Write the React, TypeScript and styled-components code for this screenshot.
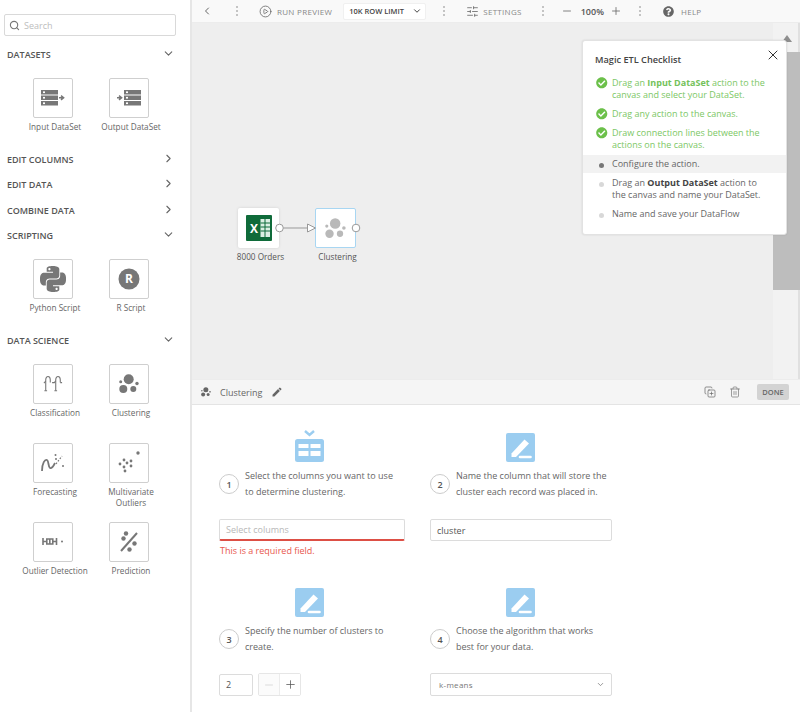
import React from 'react';
import styled, { createGlobalStyle } from 'styled-components';
import { ChevronDown, ChevronLeft, ChevronRight, CirclePlay, CopyPlus, Minus, Plus, Search, SlidersHorizontal, Trash2, X } from 'lucide-react';
import { FaCheckCircle, FaQuestionCircle } from 'react-icons/fa';
import { MdEdit } from 'react-icons/md';
import { SiPython } from 'react-icons/si';

const GlobalStyle = createGlobalStyle`
  html, body {
    margin: 0;
    padding: 0;
    background: #fff;
    font-family: 'Open Sans', 'Liberation Sans', sans-serif;
  }
  * {
    box-sizing: border-box;
  }
`;

const ICON_GREY = '#777';

function DatasetIcon({ output }: { output?: boolean }) {
  const barX = output ? 7 : 0;
  const arrowX = output ? 0 : 18;
  return (
    <svg width="24" height="16" viewBox="0 0 24 16">
      {[0, 5.5, 11].map((y) => (
        <g key={y}>
          <rect x={barX} y={y} width="17" height="4.5" fill={ICON_GREY} />
          <rect x={barX + 2} y={y + 1.4} width="2" height="1.7" fill="#fff" />
        </g>
      ))}
      <path d={`M${arrowX} 7.7h3.5M${arrowX + 2} 5.6l2.6 2.1-2.6 2.1`} stroke={ICON_GREY} strokeWidth="1.5" fill="none" />
    </svg>
  );
}

function RScriptIcon() {
  return (
    <svg width="22" height="22" viewBox="0 0 22 22">
      <circle cx="11" cy="11" r="10.5" fill={ICON_GREY} />
      <text x="11" y="15.2" textAnchor="middle" fontSize="12" fontWeight="700" fontFamily="Open Sans" fill="#fff">R</text>
    </svg>
  );
}

function ClusterIcon({ size = 20, color = ICON_GREY }: { size?: number; color?: string }) {
  return (
    <svg width={size} height={size} viewBox="0 0 20 20" fill={color}>
      <circle cx="9.7" cy="5.3" r="5" />
      <circle cx="4.3" cy="15" r="4" />
      <circle cx="14.3" cy="15" r="3" />
      <circle cx="1.7" cy="7.7" r="1.5" />
      <circle cx="18" cy="9.5" r="1.7" />
    </svg>
  );
}

function ClassificationIcon() {
  return (
    <svg width="20" height="17" viewBox="0 0 22 18" fill="none" stroke={ICON_GREY} strokeWidth="1.2">
      <path d="M3 17V5c0-5 5-5 5 0v3" />
      <path d="M1.5 17h3M1 8.5l2-2" />
      <path d="M14 17V5c0-5 5-5 5 0v3" />
      <path d="M12.5 17h3M10 8h2.5l1.5-2M19 8h2" />
    </svg>
  );
}

function ForecastIcon() {
  return (
    <svg width="24" height="20" viewBox="0 0 24 20" fill="none" stroke={ICON_GREY}>
      <path d="M1 18c0-8 3-12 5-11 2 1 1 7 3 8s4-3 5-5" strokeWidth="1.8" />
      <path d="M15 11l6-8" strokeWidth="1.2" strokeDasharray="1.6 1.6" />
      <circle cx="14.5" cy="2" r="1" fill={ICON_GREY} stroke="none" />
      <circle cx="15" cy="6" r="1" fill={ICON_GREY} stroke="none" />
      <circle cx="22" cy="13" r="1" fill={ICON_GREY} stroke="none" />
    </svg>
  );
}

function OutliersIcon() {
  const dots = [[5, 9], [1, 13], [8, 12], [12, 10], [5, 16], [12, 15], [6, 20], [19, 2]];
  return (
    <svg width="22" height="24" viewBox="0 0 22 24" fill={ICON_GREY}>
      {dots.map(([x, y]) => (
        <circle key={`${x}-${y}`} cx={x + 1} cy={y} r={x === 19 ? 1.7 : 1.4} />
      ))}
    </svg>
  );
}

function OutlierDetectionIcon() {
  return (
    <svg width="22" height="8" viewBox="0 0 22 8" fill="none" stroke={ICON_GREY} strokeWidth="1.6">
      <path d="M1 0v7M1 3.5h3M4.8 1h6v5h-6zM7.8 1v5M11 3.5h3M14.5 0v7" />
      <circle cx="20" cy="3.5" r="1" fill={ICON_GREY} stroke="none" />
    </svg>
  );
}

function PredictionIcon() {
  return (
    <svg width="18" height="21" viewBox="0 0 18 21" fill={ICON_GREY}>
      <path d="M1 20L17 2" stroke={ICON_GREY} strokeWidth="2" />
      <circle cx="6" cy="2.5" r="2.2" />
      <circle cx="3.5" cy="7.5" r="2.2" />
      <circle cx="14.5" cy="12.5" r="2.2" />
      <circle cx="9.5" cy="18.5" r="2.2" />
    </svg>
  );
}

function ExcelIcon() {
  return (
    <svg width="26" height="26" viewBox="0 0 26 26">
      <rect width="26" height="26" rx="1" fill="#0f6b3a" />
      <rect x="14.5" y="4" width="9.5" height="18" fill="#dcefe3" />
      <path d="M14.5 8h9.5M14.5 12h9.5M14.5 16h9.5M19 4v18" stroke="#0f6b3a" strokeWidth="1" />
      <text x="8" y="17.5" textAnchor="middle" fontSize="12" fontWeight="700" fontFamily="Open Sans" fill="#fff">X</text>
    </svg>
  );
}

function PencilTile() {
  return (
    <svg width="29" height="29" viewBox="0 0 29 29">
      <rect width="29" height="29" rx="2" fill="#9bcdf0" />
      <path d="M5.5 20.5L18.5 6.5l4.5 4L10 24H5.5z" fill="#fff" />
      <path d="M14 24h10.5" stroke="#fff" strokeWidth="2.6" strokeLinecap="round" />
    </svg>
  );
}

function TableTile() {
  return (
    <svg width="29" height="32" viewBox="0 0 29 32">
      <path d="M10 1l4.5 4L19 1" fill="none" stroke="#9bcdf0" strokeWidth="2.4" />
      <rect y="9" width="29" height="23" rx="2.5" fill="#9bcdf0" />
      <path d="M3.5 14h10v4h-10zM15.5 14h10v4h-10zM3.5 21h10v5h-10zM15.5 21h10v5h-10z" fill="#fff" />
    </svg>
  );
}

function ToolDots({ $ml }: { $ml: number }) {
  return (
    <DotsWrap $ml={$ml}>
      <i />
      <i />
      <i />
    </DotsWrap>
  );
}

const Tile = ({ icon, label }: { icon: React.ReactNode; label: string }) => (
  <TileItem>
    <TileBox>{icon}</TileBox>
    <TileLabel>{label}</TileLabel>
  </TileItem>
);

function CategoryHeader({ title, open }: { title: string; open?: boolean }) {
  return (
    <CategoryRow>
      <span>{title}</span>
      {open ? <ChevronDown size={13} strokeWidth={2} /> : <ChevronRight size={13} strokeWidth={2} />}
    </CategoryRow>
  );
}

function ChecklistItem({ done, active, pending, children }: { done?: boolean; active?: boolean; pending?: boolean; children: React.ReactNode }) {
  return (
    <CheckRow $done={done} $active={active}>
      <CheckMark>
        {done && <FaCheckCircle size={11.5} color="#6cc04a" />}
        {active && <Dot $color="#777" />}
        {pending && <Dot $color="#d8d8d8" />}
      </CheckMark>
      <span>{children}</span>
    </CheckRow>
  );
}

function Step({ n, text, icon }: { n: number; text: React.ReactNode; icon: React.ReactNode }) {
  return (
    <>
      <StepIcon>{icon}</StepIcon>
      <StepRow>
        <StepNumber>{n}</StepNumber>
        <StepText>{text}</StepText>
      </StepRow>
    </>
  );
}

export default function App() {
  return (
    <Page>
      <GlobalStyle />
      <Sidebar>
        <SearchBox>
          <Search size={11} strokeWidth={2.4} color="#777" />
          <span>Search</span>
        </SearchBox>
        <CategoryHeader title="DATASETS" open />
        <TileGrid>
          <Tile icon={<DatasetIcon />} label="Input DataSet" />
          <Tile icon={<DatasetIcon output />} label="Output DataSet" />
        </TileGrid>
        <CategoryHeader title="EDIT COLUMNS" />
        <CategoryHeader title="EDIT DATA" />
        <CategoryHeader title="COMBINE DATA" />
        <CategoryHeader title="SCRIPTING" open />
        <TileGrid>
          <Tile icon={<SiPython size={26} color={ICON_GREY} />} label="Python Script" />
          <Tile icon={<RScriptIcon />} label="R Script" />
        </TileGrid>
        <CategoryHeader title="DATA SCIENCE" open />
        <TileGrid>
          <Tile icon={<ClassificationIcon />} label="Classification" />
          <Tile icon={<ClusterIcon />} label="Clustering" />
          <Tile icon={<ForecastIcon />} label="Forecasting" />
          <Tile icon={<OutliersIcon />} label="Multivariate Outliers" />
          <Tile icon={<OutlierDetectionIcon />} label="Outlier Detection" />
          <Tile icon={<PredictionIcon />} label="Prediction" />
        </TileGrid>
      </Sidebar>

      <Main>
        <Toolbar>
          <ToolIcon $ml={9}><ChevronLeft size={12} strokeWidth={2} /></ToolIcon>
          <ToolDots $ml={23} />
          <ToolIcon $ml={21}><CirclePlay size={13} strokeWidth={1.5} /></ToolIcon>
          <ToolLabel $ml={5}>RUN PREVIEW</ToolLabel>
          <RowLimit>
            <span>10K ROW LIMIT</span>
            <ChevronDown size={10} strokeWidth={2.4} />
          </RowLimit>
          <ToolDots $ml={17} />
          <ToolIcon $ml={21}><SlidersHorizontal size={13} strokeWidth={1.5} /></ToolIcon>
          <ToolLabel $ml={4}>SETTINGS</ToolLabel>
          <ToolDots $ml={20} />
          <ToolIcon $ml={17}><Minus size={12} strokeWidth={1.6} /></ToolIcon>
          <ZoomValue>100%</ZoomValue>
          <ToolIcon $ml={6}><Plus size={12} strokeWidth={1.6} /></ToolIcon>
          <ToolDots $ml={17} />
          <ToolIcon $ml={22}><FaQuestionCircle size={11} color="#666" /></ToolIcon>
          <ToolLabel $ml={7}>HELP</ToolLabel>
        </Toolbar>

        <Canvas>
          <ScrollTrack>
            <ScrollArrow />
            <ScrollThumb />
          </ScrollTrack>

          <CanvasNode $left={46} $top={185}>
            <NodeBox><ExcelIcon /></NodeBox>
            <NodeLabel>8000 Orders</NodeLabel>
          </CanvasNode>
          <CanvasNode $left={123} $top={185}>
            <NodeBox $selected><ClusterIcon size={21} color="#b9b9b9" /></NodeBox>
            <NodeLabel>Clustering</NodeLabel>
          </CanvasNode>
          <Connector width="90" height="12" viewBox="0 0 90 12">
            <circle cx="4.5" cy="6" r="3.8" fill="#fff" stroke="#999" />
            <path d="M8.5 6h24" stroke="#999" />
            <path d="M32.5 2l8 4-8 4z" fill="#fff" stroke="#999" />
            <circle cx="81" cy="6" r="3.8" fill="#fff" stroke="#999" />
          </Connector>

          <Checklist>
            <ChecklistTitle>Magic ETL Checklist</ChecklistTitle>
            <CloseButton><X size={16} strokeWidth={1.5} /></CloseButton>
            <CheckList>
              <ChecklistItem done>Drag an <b>Input DataSet</b> action to the canvas and select your DataSet.</ChecklistItem>
              <ChecklistItem done>Drag any action to the canvas.</ChecklistItem>
              <ChecklistItem done>Draw connection lines between the actions on the canvas.</ChecklistItem>
              <ChecklistItem active>Configure the action.</ChecklistItem>
              <ChecklistItem pending>Drag an <b>Output DataSet</b> action to the canvas and name your DataSet.</ChecklistItem>
              <ChecklistItem pending>Name and save your DataFlow</ChecklistItem>
            </CheckList>
          </Checklist>
        </Canvas>

        <EditorHeader>
          <ClusterIcon size={10} color="#666" />
          <EditorTitle>Clustering</EditorTitle>
          <MdEdit size={12} color="#666" />
          <HeaderActions>
            <CopyPlus size={12} strokeWidth={1.4} color="#666" />
            <Trash2 size={12} strokeWidth={1.4} color="#777" />
            <DoneButton>DONE</DoneButton>
          </HeaderActions>
        </EditorHeader>

        <Form>
          <StepCell>
            <Step n={1} icon={<TableTile />} text="Select the columns you want to use to determine clustering." />
            <FieldBox $error>Select columns</FieldBox>
            <FieldError>This is a required field.</FieldError>
          </StepCell>
          <StepCell>
            <Step n={2} icon={<PencilTile />} text="Name the column that will store the cluster each record was placed in." />
            <FieldBox $value>cluster</FieldBox>
          </StepCell>
          <StepCell>
            <Step n={3} icon={<PencilTile />} text="Specify the number of clusters to create." />
            <NumberRow>
              <NumberInput>2</NumberInput>
              <Stepper>
                <StepperButton $disabled><Minus size={12} strokeWidth={1.2} /></StepperButton>
                <StepperButton><Plus size={13} strokeWidth={1.4} /></StepperButton>
              </Stepper>
            </NumberRow>
          </StepCell>
          <StepCell>
            <Step n={4} icon={<PencilTile />} text="Choose the algorithm that works best for your data." />
            <AlgoSelect>
              <span>k-means</span>
              <ChevronDown size={9} strokeWidth={2} />
            </AlgoSelect>
          </StepCell>
        </Form>
      </Main>
    </Page>
  );
}

const Page = styled.div`
  width: 800px;
  height: 712px;
  display: flex;
  overflow: hidden;
  background: #fff;
`;

const Sidebar = styled.aside`
  width: 192px;
  flex-shrink: 0;
  padding: 14px 2px 0 0;
  border-right: 2px solid #e6e6e6;
  background: #fff;
`;

const SearchBox = styled.div`
  width: 172px;
  height: 22px;
  margin: 0 0 6px 4px;
  padding-left: 4px;
  display: flex;
  align-items: center;
  gap: 4px;
  border: 1px solid #d9d9d9;
  border-radius: 2px;
  color: #bdbdbd;
  font-size: 9px;
`;

const CategoryRow = styled.div`
  height: 25.5px;
  padding: 0 13px 0 7px;
  display: flex;
  align-items: center;
  justify-content: space-between;
  color: #555;
  font-size: 9px;
  font-weight: 600;
  svg {
    color: #666;
    margin-top: -2px;
  }
`;

const TileGrid = styled.div`
  padding: 10.5px 0 0 15px;
  display: grid;
  grid-template-columns: 76px 76px;
  grid-auto-rows: 68.5px;
  row-gap: 10.5px;
`;

const TileItem = styled.div`
  display: flex;
  flex-direction: column;
  align-items: center;
`;

const TileBox = styled.div`
  width: 40px;
  height: 40px;
  flex-shrink: 0;
  display: flex;
  align-items: center;
  justify-content: center;
  border: 1.5px solid #cfcfcf;
  border-radius: 2px;
  background: #fff;
`;

const TileLabel = styled.div`
  width: 76px;
  margin-top: 3px;
  padding-left: 4px;
  text-align: center;
  color: #666;
  font-size: 8.2px;
  line-height: 11px;
`;

const Main = styled.main`
  flex: 1;
  min-width: 0;
  display: flex;
  flex-direction: column;
`;

const Toolbar = styled.div`
  height: 23px;
  flex-shrink: 0;
  display: flex;
  align-items: center;
  background: #f9f9f9;
  border-bottom: 1px solid #ececec;
`;

const ToolIcon = styled.span<{ $ml: number }>`
  margin-left: ${(p) => p.$ml}px;
  display: inline-flex;
  color: #666;
`;

const ToolLabel = styled.span<{ $ml: number }>`
  margin-left: ${(p) => p.$ml}px;
  color: #888;
  font-size: 8px;
  letter-spacing: 0.3px;
`;

const DotsWrap = styled.span<{ $ml: number }>`
  margin-left: ${(p) => p.$ml}px;
  display: inline-flex;
  flex-direction: column;
  gap: 2px;
  i {
    width: 2px;
    height: 2px;
    background: #c4c4c4;
    display: block;
  }
`;

const RowLimit = styled.div`
  width: 83px;
  height: 17px;
  margin-left: 11px;
  padding: 0 3px 0 5px;
  display: flex;
  align-items: center;
  justify-content: space-between;
  background: #fff;
  border-radius: 2px;
  border: 1px solid #f0f0f0;
  color: #444;
  font-size: 7.5px;
  font-weight: 600;
`;

const ZoomValue = styled.span`
  margin-left: 8px;
  color: #555;
  font-size: 9px;
  font-weight: 600;
`;

const Canvas = styled.div`
  position: relative;
  height: 356px;
  flex-shrink: 0;
  background: #eeeeee;
`;

const ScrollTrack = styled.div`
  position: absolute;
  top: 0;
  right: 0;
  bottom: 0;
  width: 27px;
  background: #f2f2f2;
  border-right: 2px solid #e0e0e0;
`;

const ScrollArrow = styled.div`
  position: absolute;
  top: 12px;
  left: 9px;
  width: 0;
  height: 0;
  border-left: 5px solid transparent;
  border-right: 5px solid transparent;
  border-bottom: 7px solid #8e8e8e;
`;

const ScrollThumb = styled.div`
  position: absolute;
  top: 29px;
  left: 0;
  right: -2px;
  height: 238px;
  background: #bdbdbd;
`;

const CanvasNode = styled.div<{ $left: number; $top: number }>`
  position: absolute;
  left: ${(p) => p.$left}px;
  top: ${(p) => p.$top}px;
  width: 41px;
  display: flex;
  flex-direction: column;
  align-items: center;
`;

const NodeBox = styled.div<{ $selected?: boolean }>`
  width: 41px;
  height: 40px;
  display: flex;
  align-items: center;
  justify-content: center;
  background: #fff;
  border-radius: 2px;
  border: ${(p) => (p.$selected ? '1.5px solid #a8d6f2' : '0')};
  box-shadow: ${(p) => (p.$selected ? 'none' : '0 0 3px rgba(0, 0, 0, 0.12)')};
`;

const NodeLabel = styled.div`
  margin: 3px 0 0 4px;
  color: #555;
  font-size: 8.2px;
  line-height: 12px;
  white-space: nowrap;
`;

const Connector = styled.svg`
  position: absolute;
  left: 83px;
  top: 199px;
`;

const Checklist = styled.div`
  position: absolute;
  top: 17px;
  right: 13px;
  width: 205px;
  height: 195px;
  padding-top: 12px;
  background: #fff;
  border: 1px solid #e2e2e2;
  border-radius: 3px;
  box-shadow: 0 0 2px rgba(0, 0, 0, 0.12);
`;

const ChecklistTitle = styled.div`
  padding-left: 12px;
  color: #444;
  font-size: 9.2px;
  font-weight: 600;
  line-height: 13px;
`;

const CloseButton = styled.span`
  position: absolute;
  top: 6px;
  right: 5px;
  display: inline-flex;
  color: #333;
`;

const CheckList = styled.div`
  margin-top: 8px;
  display: flex;
  flex-direction: column;
  gap: 1px;
`;

const CheckRow = styled.div<{ $done?: boolean; $active?: boolean }>`
  padding: 3px 18px 3px 13px;
  display: flex;
  background: ${(p) => (p.$active ? '#f2f2f2' : 'transparent')};
  color: ${(p) => (p.$done ? '#7cc765' : '#666')};
  font-size: 9px;
  line-height: 12px;
  b {
    font-weight: 700;
    color: ${(p) => (p.$done ? '#74c25a' : '#444')};
  }
`;

const CheckMark = styled.span`
  width: 16px;
  height: 12px;
  flex-shrink: 0;
  display: flex;
  align-items: center;
`;

const Dot = styled.i<{ $color: string }>`
  width: 5px;
  height: 5px;
  margin: 2px 0 0 3px;
  border-radius: 50%;
  background: ${(p) => p.$color};
`;

const EditorHeader = styled.div`
  height: 26px;
  flex-shrink: 0;
  padding: 0 11px 0 9px;
  display: flex;
  align-items: center;
  background: #f5f5f5;
  border-top: 1px solid #ececec;
  border-bottom: 1px solid #e4e4e4;
`;

const EditorTitle = styled.span`
  margin: 0 9px 0 9px;
  color: #666;
  font-size: 9px;
`;

const HeaderActions = styled.div`
  margin-left: auto;
  display: flex;
  align-items: center;
  gap: 13px;
`;

const DoneButton = styled.span`
  width: 32px;
  height: 16px;
  margin-left: 3px;
  display: flex;
  align-items: center;
  justify-content: center;
  background: #d3d3d3;
  border-radius: 2px;
  color: #666;
  font-size: 7.5px;
  font-weight: 600;
`;

const Form = styled.div`
  padding: 25px 0 0 27px;
  display: grid;
  grid-template-columns: 186px 182px;
  column-gap: 25px;
  grid-auto-rows: 155px;
`;

const StepCell = styled.div`
  display: flex;
  flex-direction: column;
`;

const StepIcon = styled.div`
  width: 180px;
  height: 32px;
  display: flex;
  align-items: flex-end;
  justify-content: center;
`;

const StepRow = styled.div`
  margin-top: 6px;
  height: 32px;
  display: flex;
  align-items: center;
  gap: 6px;
`;

const StepNumber = styled.span`
  width: 20px;
  height: 20px;
  flex-shrink: 0;
  display: flex;
  align-items: center;
  justify-content: center;
  border: 1px solid #ccc;
  border-radius: 50%;
  color: #555;
  font-size: 9px;
  font-weight: 600;
`;

const StepText = styled.span`
  width: 152px;
  color: #666;
  font-size: 9px;
  line-height: 16px;
`;

const FieldBox = styled.div<{ $error?: boolean; $value?: boolean }>`
  margin-top: 19px;
  height: 22px;
  padding-left: 6px;
  display: flex;
  align-items: center;
  border: 1px solid #dcdcdc;
  border-bottom: ${(p) => (p.$error ? '2px solid #dd4f45' : '1px solid #dcdcdc')};
  border-radius: 2px;
  color: ${(p) => (p.$value ? '#555' : '#b8b8b8')};
  font-size: 9px;
`;

const FieldError = styled.div`
  margin-top: 3px;
  padding-left: 1px;
  color: #e8574c;
  font-size: 9px;
  line-height: 13px;
`;

const NumberRow = styled.div`
  margin-top: 18px;
  display: flex;
  align-items: center;
  gap: 5px;
`;

const NumberInput = styled.div`
  width: 34px;
  height: 22px;
  padding-left: 6px;
  display: flex;
  align-items: center;
  border: 1px solid #dcdcdc;
  border-radius: 2px;
  color: #555;
  font-size: 9px;
`;

const Stepper = styled.div`
  width: 43px;
  height: 23px;
  display: flex;
  border: 1px solid #e6e6e6;
  border-radius: 2px;
`;

const StepperButton = styled.span<{ $disabled?: boolean }>`
  flex: 1;
  display: flex;
  align-items: center;
  justify-content: center;
  color: ${(p) => (p.$disabled ? '#c8c8c8' : '#555')};
  background: ${(p) => (p.$disabled ? '#fbfbfb' : '#fff')};
  & + & {
    border-left: 1px solid #ececec;
  }
`;

const AlgoSelect = styled.div`
  margin-top: 18px;
  height: 23px;
  padding: 0 6px 0 8px;
  display: flex;
  align-items: center;
  justify-content: space-between;
  border: 1px solid #dcdcdc;
  border-radius: 2px;
  color: #777;
  font-size: 8px;
  letter-spacing: 0.3px;
`;
